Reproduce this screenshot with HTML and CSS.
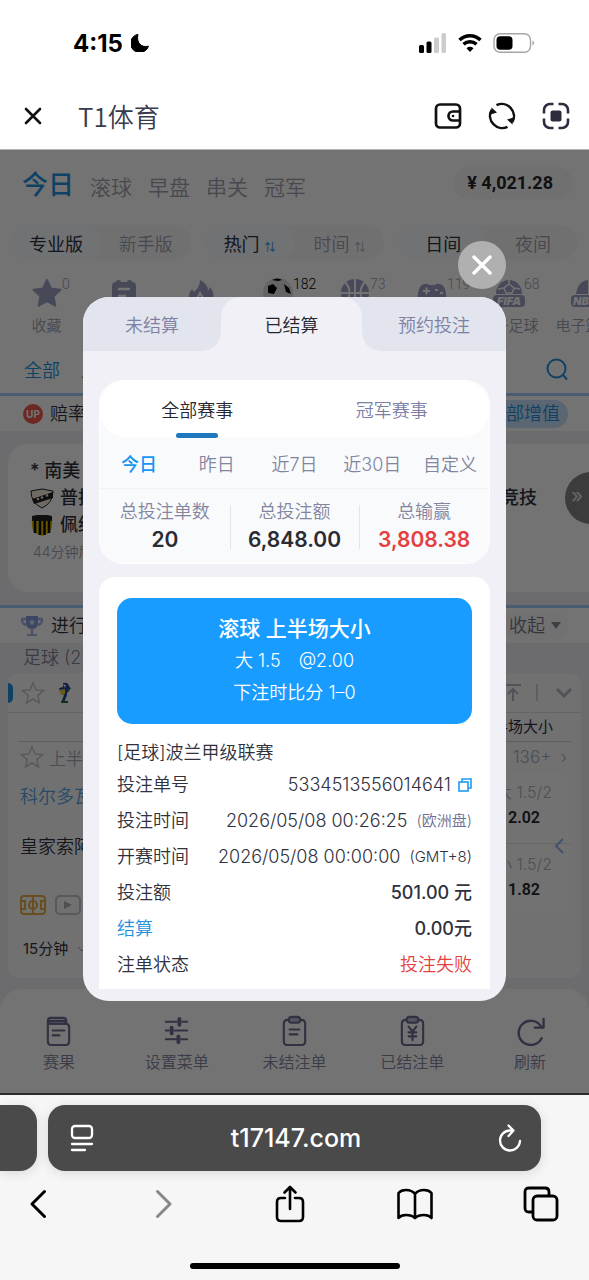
FILE: index.html
```html
<!DOCTYPE html>
<html lang="zh-CN">
<head>
<meta charset="utf-8">
<meta name="viewport" content="width=device-width, initial-scale=1">
<title>T1体育</title>
<link rel="stylesheet" href="styles.css">
</head>
<body>
<header class="top">
  <div class="status">
    <div class="status-time">4:15
      <svg width="18" height="18" viewBox="0 0 18 18"><path d="M7 .3A9.200 9.200 0 1 0 17.500 12.200C10 14 5 8.500 7 .3z" fill="#000" stroke="#000"/></svg>
    </div>
    <div class="status-icons">
      <svg width="28" height="20" viewBox="0 0 28 20"><rect x="0" y="12" width="5" height="8" rx="1.500"/><rect x="7.500" y="8.500" width="5" height="11.500" rx="1.500"/><g fill="#ccc"><rect x="15" y="4.500" width="5" height="15.500" rx="1.500"/><rect x="22.500" y="0" width="4.500" height="20" rx="1.500"/></g></svg>
      <svg width="24" height="20" viewBox="0 0 24 20" fill="none" stroke="#000" stroke-width="3.400"><path d="M1.500 7a15 15 0 0 1 21 0M5.500 11.300a9.500 9.500 0 0 1 13 0"/><path d="M12 19l-3.500-3.700a5 5 0 0 1 7 0z" fill="#000" stroke="none"/></svg>
      <svg width="42" height="20" viewBox="0 0 42 20"><rect x="1" y=".8" width="36.500" height="18.400" rx="6" fill="none" stroke="#a6a6a6" stroke-width="1.400"/><rect x="3.500" y="3.200" width="16" height="13.600" rx="3.800"/><path d="M39.500 7.500v5q1.500-.8 1.500-2.500t-1.500-2.500z" fill="#999"/></svg>
    </div>
  </div>
  <div class="titlebar">
    <button class="icon-btn" aria-label="关闭"><svg width="18" height="18" viewBox="0 0 18 18" fill="none" stroke="#111" stroke-width="2.600" stroke-linecap="round"><path d="M2 2l14 14M16 2L2 16"/></svg></button>
    <h1>T1体育</h1>
    <button class="icon-btn" aria-label="钱包"><svg width="28" height="28" viewBox="0 0 28 28" fill="none" stroke="#111" stroke-width="2.700"><rect x="2" y="2.500" width="24" height="23" rx="4"/><path d="M26 9.500h-7a4.500 4.500 0 0 0 0 9h7" /><circle cx="19" cy="14" r="1.300" fill="#111" stroke="none"/></svg></button>
    <button class="icon-btn" aria-label="刷新"><svg width="28" height="28" viewBox="0 0 28 28" fill="none" stroke="#111" stroke-width="2.500"><path d="M8.500 3.200A12.200 12.200 0 0 1 24.500 20M19.500 24.800A12.200 12.200 0 0 1 3.500 8"/><path d="M3.500 5.500l5.500 5-6.500 2zM24.500 22.500l-5.500-5 6.500-2z" fill="#111" stroke="none"/></svg></button>
    <button class="icon-btn" aria-label="扫描"><svg width="28" height="28" viewBox="0 0 28 28" fill="none" stroke="#2d2c3e" stroke-width="2.600"><path d="M2 11.500V8a6 6 0 0 1 6-6h3.500M16.500 2H20a6 6 0 0 1 6 6v3.500M26 16.500V20a6 6 0 0 1-6 6h-3.500M11.500 26H8a6 6 0 0 1-6-6v-3.500"/><rect x="8.500" y="8.500" width="11" height="11" rx="2" fill="#2d2c3e" stroke="none"/></svg></button>
  </div>
</header>

<main class="app">
  <nav class="main-nav">
    <a class="on" href="#">今日</a><a href="#">滚球</a><a href="#">早盘</a><a href="#">串关</a><a href="#">冠军</a>
    <span class="balance">¥ 4,021.28</span>
  </nav>
  <div class="toggles">
    <div class="toggle"><button class="on">专业版</button><button>新手版</button></div>
    <div class="toggle"><button class="on">热门 <i class="sort blue">⇅</i></button><button>时间 <i class="sort">⇅</i></button></div>
    <div class="toggle"><button class="on">日间</button><button>夜间</button></div>
  </div>
  <ul class="sports">
    <li><svg viewBox="0 0 32 32"><path d="M16 3l4 8.500 9.500 1.300-7 6.500 1.800 9.400L16 24.200l-8.300 4.500 1.800-9.400-7-6.500L12 11.500z" stroke="#9ea1c4" stroke-width="2" stroke-linejoin="round"/></svg><sup>0</sup><b>收藏</b></li>
    <li><svg viewBox="0 0 32 32"><path d="M8 5q0-2 2.500-2T13 5h6q0-2 2.500-2T24 5q4 0 4 4v16q0 4-4 4H8q-4 0-4-4V9q0-4 4-4z"/><path d="M10 12h12M10 19h8" stroke="#fff" stroke-width="2.500"/></svg><b>赛程</b></li>
    <li><svg viewBox="0 0 32 32"><path d="M15 3q8 4 8 11l2-4q5 6 3 13-3 8-12 8T4 22q-1-5 3-10l2 3Q15 10 15 3z"/><path d="M12 22l3-6 5 9" stroke="#fff" stroke-width="2" fill="none"/></svg><b>热门</b></li>
    <li class="on"><svg viewBox="0 0 32 32"><circle cx="16" cy="16" r="15" fill="#ddd"/><path d="M6 9l5-2 4 4-3 6-6-1zM22 7l5 4 2 6-5-2zM10 3q6-3 10 0l-4 1z" fill="#000"/></svg><sup>182</sup><b>足球</b></li>
    <li><svg viewBox="0 0 32 32"><circle cx="16" cy="16" r="14"/><path d="M16 2v28M2 16h28M6 5q9 10 0 22M26 5q-9 10 0 22" fill="none" stroke="#fff" stroke-width="2"/></svg><sup>73</sup><b>篮球</b></li>
    <li><svg viewBox="0 0 32 32"><path d="M8 7q4-1 5 1h6q1-2 5-1 5 1 6 10t-1 9-8-5H11q-5 7-8 5T2 17Q3 8 8 7z"/><path d="M7 14h7M10.500 10.500v7M19 13h3M24 16h3" stroke="#fff" stroke-width="2"/></svg><sup>119</sup><b>电竞</b></li>
    <li><svg viewBox="0 0 32 32"><path d="M3 17a13 14 0 0 1 26 0z"/><path d="M16 7l5 4-2 5h-6l-2-5zM5 12l6-1M27 12l-6-1M16 3v4" stroke="#fff" stroke-width="1.500" fill="none"/><rect y="18" width="32" height="12" rx="4"/><text x="16" y="28" text-anchor="middle" class="fifa">FIFA</text></svg><sup>68</sup><b>电子足球</b></li>
    <li><svg viewBox="0 0 32 32"><path d="M6 17Q8 4 18 3v14z"/><rect x="1" y="18" width="31" height="12" rx="4"/><text x="3" y="28" class="fifa">NBA</text></svg><b>电子篮球</b></li>
  </ul>
  <div class="filters"><button class="on">全部</button><button>人气</button>
    <button class="search" aria-label="搜索"><svg width="24" height="24" viewBox="0 0 24 24" fill="none" stroke="#2391de" stroke-width="2"><circle cx="11.500" cy="11.500" r="9"/><path d="M18 18l4 4.500"/></svg></button>
  </div>
  <div class="promo"><span class="up">UP</span><span>赔率</span><a class="boost" href="#">全部增值</a></div>

  <section class="match-card">
    <h2>* 南美</h2>
    <p><svg width="24" height="24" viewBox="0 0 24 24"><path d="M1 5l11-2 11 2q0 12-11 17Q1 17 1 5z" fill="#f5eedd" stroke="#222"/><path d="M2 13L23 6v6L4 18z" fill="#222"/><path d="M7 13.500l2-1M11 12l2-1M16 10l2-1" stroke="#eee" stroke-width="2"/></svg>普拉<strong>竞技</strong></p>
    <p><svg width="24" height="24" viewBox="0 0 24 24"><path d="M2 4l5-2h10l5 2q1 13-3 16l-7 3-7-3Q1 17 2 4z" fill="#e0b800"/><path d="M5 8v12M10 8v14M14.500 8v14M19 8v12" stroke="#111" stroke-width="2.600"/><path d="M2 3l5-1h10l5 1v5H2z" fill="#222"/></svg>佩纳</p>
    <small>44分钟后</small>
    <button class="next" aria-label="下一场">»</button>
  </section>

  <div class="live-head"><svg width="22" height="22" viewBox="0 0 22 22"><path d="M5 1h12v8q-1 5-6 5T5 9z" fill="#879ddc"/><path d="M5 4H1q0 6 5 6M17 4h4q0 6-5 6M11 13v6" fill="none" stroke="#a5b8ea" stroke-width="2.500"/><path d="M6 19h10v2H6z" fill="#a5b8ea"/><path d="M11 4l1 2 2 .3-1.500 1.500.5 2.200-2-1-2 1 .5-2.200L8 6.300l2-.3z" fill="#dce5ff"/></svg><span>进行</span><button class="fold">收起 <i></i></button></div>
  <h3 class="group">足球 (2)</h3>

  <section class="league">
    <div class="league-head">
      <i class="mark"></i>
      <svg width="24" height="24" viewBox="0 0 24 24" class="star"><path d="M12 2l3 7 7.500.6-5.700 5 1.700 7.400L12 18l-6.500 4 1.700-7.400-5.700-5L9 9z"/></svg>
      <svg width="14" height="22" viewBox="0 0 14 22"><path d="M5 1q5-1 6 3l2 3-4 1v5l-3 8H3l3-8-3-2-2-5 4-1z" fill="#24479a"/><path d="M1 8l6-1v5l-4 1z" fill="#e0cd43"/><path d="M5 2l3 1-1 3z" fill="#eee"/><path d="M9 6l3 2-3 3zM3 19h7v2H3z" fill="#20723b"/></svg>
      <svg class="tools" width="72" height="20" viewBox="0 0 72 20" fill="none" stroke="#b5b7c5" stroke-width="2"><path d="M0 2h16M8 18V6M3 11l5-5 5 5"/><path d="M32 1v17" stroke="#d2d3da"/><path d="M52 6l7 7 7-7" stroke-width="3"/></svg>
    </div>
    <div class="market"><span>上半场大小</span></div>
    <div class="half"><svg width="24" height="24" viewBox="0 0 24 24" class="star"><path d="M12 2l3 7 7.500.6-5.700 5 1.700 7.400L12 18l-6.500 4 1.700-7.400-5.700-5L9 9z"/></svg><span>上半</span><span class="more">136+ &nbsp;›</span></div>
    <div class="league-body">
      <div class="teams">
        <p class="blue">科尔多瓦</p>
        <p>皇家索阿</p>
        <div class="media">
          <svg width="26" height="20" viewBox="0 0 26 20" fill="none" stroke="#e6ae45" stroke-width="2"><rect x="1" y="1" width="24" height="18" rx="3"/><path d="M13 1v18M1 6h4v8H1M25 6h-4v8h4"/><circle cx="13" cy="10" r="4"/></svg>
          <svg width="26" height="20" viewBox="0 0 26 20" fill="none" stroke="#c5c6cf" stroke-width="2"><rect x="1" y="1" width="24" height="18" rx="4"/><path d="M9 6l8 4-8 4z" fill="#b0b1bb" stroke="none"/></svg>
        </div>
        <p class="clock">15分钟 <svg width="10" height="6" viewBox="0 0 10 6" fill="none" stroke="#999"><path d="M1 1l4 4 4-4"/></svg></p>
      </div>
      <div class="odds">
        <button><span>大 1.5/2</span><b>2.02</b></button>
        <button><span>小 1.5/2</span><b>1.82</b></button>
        <svg class="back" width="12" height="16" viewBox="0 0 12 16" fill="none" stroke="#8eb4e8" stroke-width="2"><path d="M9 1L2 8l7 7"/></svg>
      </div>
    </div>
  </section>

  <nav class="tabbar">
    <a href="#"><svg viewBox="0 0 32 32"><path d="M5 9V6q0-3 3-3h13q3 0 3 3v3M5 9h19q3 0 3 4v14q0 4-4 4H9q-4 0-4-4zM10 16h12M10 21h7"/><path d="M6 6h17v3H6z" class="tint"/></svg>赛果</a>
    <a href="#"><svg viewBox="0 0 32 32"><path d="M5 7h11M22 7h5M5 16h3M14 16h13M5 25h11M21 25h6"/><path d="M19 4v6M11 13v6M18 22v6" stroke-width="4"/></svg>设置菜单</a>
    <a href="#"><svg viewBox="0 0 32 32"><path d="M10 5H9Q5 5 5 9v18q0 4 4 4h14q4 0 4-4V9q0-4-4-4h-1"/><rect x="10" y="2" width="12" height="6" rx="3" class="tint"/><path d="M11 15h10M11 20h8"/></svg>未结注单</a>
    <a href="#"><svg viewBox="0 0 32 32"><path d="M10 5H9Q5 5 5 9v18q0 4 4 4h14q4 0 4-4V9q0-4-4-4h-1"/><rect x="10" y="2" width="12" height="6" rx="3" class="tint"/><path d="M12 12l4 5 4-5M16 17v9M12 18h8M12 22h8"/></svg>已结注单</a>
    <a href="#"><svg viewBox="0 0 32 32"><path d="M27 12A12.500 12.500 0 1 0 27.500 24M29.500 4v9h-9" stroke-width="2.500"/></svg>刷新</a>
  </nav>

  <div class="overlay">
    <button class="close" aria-label="关闭"><svg width="20" height="20" viewBox="0 0 20 20" fill="none" stroke="#fff" stroke-width="3.400" stroke-linecap="round"><path d="M2 2l16 16M18 2L2 18"/></svg></button>
    <section class="modal" role="dialog" aria-label="已结算">
      <div class="tabs"><button>未结算</button><button class="on">已结算</button><button>预约投注</button></div>
      <div class="panel">
        <div class="kinds"><button class="on">全部赛事</button><button>冠军赛事</button></div>
        <div class="ranges"><button class="on">今日</button><button>昨日</button><button>近7日</button><button>近30日</button><button>自定义</button></div>
        <dl class="stats">
          <div><dt>总投注单数</dt><dd>20</dd></div>
          <div><dt>总投注额</dt><dd>6,848.00</dd></div>
          <div><dt>总输赢</dt><dd class="red">3,808.38</dd></div>
        </dl>
      </div>
      <article class="ticket">
        <div class="pick"><h2>滚球 上半场大小</h2><p>大 1.5<span>@2.00</span></p><p>下注时比分 1–0</p></div>
        <p class="league-name">[足球]波兰甲级联赛</p>
        <dl class="rows">
          <div><dt>投注单号</dt><dd>5334513556014641<button class="copy" aria-label="复制"><svg width="14" height="14" viewBox="0 0 14 14" fill="none" stroke="#1d9bf0" stroke-width="1.600"><path d="M4 4V1h9v9h-3"/><rect x="1" y="4" width="9" height="9"/></svg></button></dd></div>
          <div><dt>投注时间</dt><dd>2026/05/08 00:26:25<small class="muted">(欧洲盘)</small></dd></div>
          <div><dt>开赛时间</dt><dd>2026/05/08 00:00:00<small>(GMT+8)</small></dd></div>
          <div><dt>投注额</dt><dd class="strong">501.00 元</dd></div>
          <div><dt class="blue">结算</dt><dd class="strong">0.00元</dd></div>
          <div><dt>注单状态</dt><dd class="red">投注失败</dd></div>
        </dl>
      </article>
    </section>
  </div>
</main>

<footer class="browser">
  <div class="urls">
    <div class="prev-tab"></div>
    <div class="url">
      <button class="icon-btn" aria-label="页面菜单"><svg width="24" height="28" viewBox="0 0 24 28" fill="none" stroke="#fff" stroke-width="2.300" stroke-linecap="round"><rect x="2" y="2" width="20" height="12" rx="3"/><path d="M2 20h20M2 26h13"/></svg></button>
      <span>t17147.com</span>
      <button class="icon-btn" aria-label="重新加载"><svg width="24" height="28" viewBox="0 0 24 28" fill="none" stroke="#fff" stroke-width="2.300" stroke-linecap="round" stroke-linejoin="round"><path d="M14 6.500h-2A10 10 0 1 0 22 17M10.500 1.500l5 5-5 5.500"/></svg></button>
    </div>
  </div>
  <nav class="tools-row">
    <button class="icon-btn" aria-label="后退"><svg width="18" height="30" viewBox="0 0 18 30" fill="none" stroke="#000" stroke-width="3" stroke-linecap="round" stroke-linejoin="round"><path d="M15.500 2.500L3 15l12.500 12.500"/></svg></button>
    <button class="icon-btn" aria-label="前进"><svg width="18" height="30" viewBox="0 0 18 30" fill="none" stroke="#888" stroke-width="3" stroke-linecap="round" stroke-linejoin="round"><path d="M2.500 2.500L15 15 2.500 27.500"/></svg></button>
    <button class="icon-btn" aria-label="分享"><svg width="30" height="38" viewBox="0 0 30 38" fill="none" stroke="#000" stroke-width="2.600" stroke-linecap="round" stroke-linejoin="round"><path d="M10 13H6q-4 0-4 4v15q0 4 4 4h18q4 0 4-4V17q0-4-4-4h-4M15 24V2M9.500 7.500L15 2l5.500 5.500"/></svg></button>
    <button class="icon-btn" aria-label="书签"><svg width="38" height="32" viewBox="0 0 38 32" fill="none" stroke="#000" stroke-width="2.600" stroke-linejoin="round"><path d="M19 6Q16 2 10 2 5 2 2.500 5v25Q5 27 10 27q6 0 9 3 3-3 9-3 5 0 7.500 3V5Q33 2 28 2q-6 0-9 4zM19 6v24"/></svg></button>
    <button class="icon-btn" aria-label="标签页"><svg width="36" height="36" viewBox="0 0 36 36" fill="none" stroke="#000" stroke-width="2.800"><rect x="10" y="10" width="24" height="24" rx="4"/><path d="M10 26H6q-4 0-4-4V6q0-4 4-4h16q4 0 4 4v4"/></svg></button>
  </nav>
  <div class="home"></div>
</footer>
</body>
</html>
```

FILE: styles.css
```css
* { box-sizing: border-box; }
body {
  margin: 0;
  min-height: 100vh;
  display: flex;
  flex-direction: column;
  font-family: Inter, "Noto Sans CJK SC", sans-serif;
  font-size: 18px;
  font-weight: 350;
  color: #30313d;
  background: #fff;
}
h1, h2, h3, p, dl, dd, dt, ul { margin: 0; padding: 0; font-weight: inherit; font-size: inherit; }
button { border: 0; padding: 0; background: none; font: inherit; color: inherit; }
a { color: inherit; text-decoration: none; }
i { font-style: normal; }
svg { display: block; flex: none; }
.icon-btn { display: flex; align-items: center; justify-content: center; }

/* status bar and title */
.top { height: 150px; flex: none; border-bottom: 1px solid #b5b5b5; }
.status { height: 86px; padding: 0 54px 0 73px; display: flex; justify-content: space-between; align-items: center; }
.status-time { display: flex; align-items: center; gap: 8px; font-size: 24px; font-weight: 700; color: #000; }
.status-icons { display: flex; align-items: center; gap: 11px; }
.titlebar { height: 60px; padding: 0 19px 0 24px; display: flex; align-items: center; gap: 26px; }
.titlebar h1 { flex: 1; margin-left: 10px; font-family: "Noto Sans CJK SC", sans-serif; font-size: 26px; line-height: 36px; color: #3a3a4a; }

/* page */
.app { position: relative; flex: 1; display: flex; flex-direction: column; overflow: hidden; background: #f0f0f5; }
.main-nav { height: 67px; padding: 0 16px 2px 22px; display: flex; align-items: center; gap: 16px; background: #fff; font-size: 21px; color: #a0a1b0; white-space: nowrap; }
.main-nav a { padding-top: 6px; }
.main-nav .on { font-size: 26px; font-weight: 500; color: #2391de; padding-top: 0; }
.balance { margin-left: auto; padding: 4px 20px 4px 14px; border-radius: 18px; background: #f8f8fa; font-family: Roboto, sans-serif; font-size: 18px; line-height: 24px; font-weight: 700; color: #26262e; }
.toggles { height: 53px; padding: 8px 11px 10px; display: grid; grid-template-columns: 1fr 1fr 1fr; gap: 14px; background: #fff; }
.toggle { display: flex; border-radius: 18px; background: #f8f8fa; color: #a0a1b0; }
.toggle button { flex: 1; white-space: nowrap; }
.toggle .on { border-radius: 18px; color: #30313d; font-weight: 400; background: #fafcff; }
.sort { font-size: 11px; }
.sort.blue { color: #2391de; }
.sports { flex: none; height: 74px; margin: 0; padding: 0 8px; display: flex; overflow: hidden; list-style: none; background: #fff; }
.sports li { position: relative; flex: 0 0 77px; display: flex; flex-direction: column; align-items: center; gap: 7px; padding-top: 7px; color: #a0a1b0; font-size: 15px; }
.sports svg { width: 32px; height: 32px; fill: #9ea1c4; }
.sports b { font-weight: inherit; line-height: 20px; white-space: nowrap; }
.sports sup { position: absolute; left: 54px; top: 5px; font-family: Roboto, sans-serif; font-size: 14px; line-height: 18px; }
.sports .on { color: #000; }
.sports .fifa { font: italic 900 11px Inter, sans-serif; fill: #fff; }
.filters { height: 52px; padding: 0 20px 0 24px; display: flex; align-items: center; gap: 21px; background: #fff; border-bottom: 3px solid #9fcef6; }
.filters .on { color: #2391de; }
.search { margin-left: auto; }
.promo { height: 35px; padding: 0 21px 0 23px; display: flex; align-items: center; gap: 7px; background: #fff; line-height: 24px; }
.up { width: 20px; height: 20px; border-radius: 50%; background: #f0594b; color: #fff; font-size: 10px; line-height: 20px; font-weight: 700; text-align: center; }
.boost { margin-left: auto; padding: 0 8px; border-radius: 15px; background: #c8e2fb; color: #2391de; line-height: 28px; }
.match-card { position: relative; overflow: hidden; height: 148px; margin: 13px 0 13px 8px; padding: 13px 22px; border-radius: 20px 0 0 20px; background: #fff; }
.match-card h2 { font-weight: 500; line-height: 27px; }
.match-card p { display: flex; align-items: center; gap: 6px; line-height: 27px; font-weight: 500; }
.match-card strong { margin-left: auto; margin-right: 30px; font-weight: 500; }
.match-card small { display: block; padding: 0 3px; font-size: 14px; line-height: 28px; color: #a0a1b0; }
.next { position: absolute; right: -28px; top: 28px; width: 52px; height: 52px; padding: 0 28px 4px 0; border-radius: 50%; background: #858585; color: #ddd; font-size: 20px; line-height: 24px; font-weight: 500; }
.live-head { height: 38px; padding: 0 21px; display: flex; align-items: center; gap: 8px; background: #fff; border-top: 3px solid #9fcef6; line-height: 24px; }
.fold { margin-left: auto; padding: 0 7px; display: flex; align-items: center; gap: 6px; border-radius: 14px; background: #fafafb; line-height: 28px; color: #777988; }
.fold i { border: 5px solid transparent; border-top: 7px solid #8b8c98; border-bottom: 0; }
.group { height: 30px; padding-left: 23px; line-height: 30px; color: #81839a; }

.league { margin: 0 8px; height: 305px; border-radius: 12px; background: #fbfbfc; display: flex; flex-direction: column; overflow: hidden; }
.league-head { height: 40px; display: flex; align-items: center; gap: 13px; border-bottom: 1px solid #dddde3; }
.mark { width: 5px; height: 20px; margin-right: -5px; border-radius: 0 6px 6px 0; background: #2391de; }
.star { fill: none; stroke: #c4c5cf; stroke-width: 1.5; }
.tools { margin-left: auto; margin-right: 4px; }
.market { height: 29px; margin: 0 10px; padding-right: 18px; line-height: 28px; text-align: right; font-size: 15px; font-weight: 400; border-bottom: 1px solid #d2d3da; }
.half { height: 30px; padding: 0 14px 0 12px; display: flex; align-items: center; gap: 5px; font-size: 17px; color: #a9aab8; }
.more { margin-left: auto; }
.league-body { flex: 1; display: flex; justify-content: space-between; }
.teams { width: 120px; padding-left: 12px; white-space: nowrap; line-height: 50px; }
.teams .blue { color: #55a5e6; }
.teams .media { height: 62px; display: flex; gap: 9px; align-items: center; padding-top: 4px; }
.teams .clock { display: flex; align-items: center; gap: 9px; padding-left: 3px; font-size: 15px; line-height: 30px; font-weight: 400; }
.odds { position: relative; width: 160px; height: 143px; margin-right: 10px; display: grid; gap: 1px; background: #e2e2e7; border-radius: 8px; overflow: hidden; }
.odds button { display: flex; flex-direction: column; align-items: flex-end; justify-content: center; gap: 4px; padding: 0 19px 4px 0; background: #fdfdfe; font-size: 16px; line-height: 20px; color: #b0b1bd; }
.odds b { padding-right: 12px; font-family: Roboto, sans-serif; font-weight: 600; line-height: 24px; color: #26262e; }
.back { position: absolute; right: 5px; top: 66px; }

.tabbar { flex: none; height: 104px; margin-top: auto; padding-top: 26px; display: grid; grid-template-columns: repeat(5, 1fr); border-radius: 22px 22px 0 0; background: #fff; font-size: 16px; color: #83859f; }
.tabbar a { display: flex; flex-direction: column; align-items: center; gap: 4px; line-height: 24px; }
.tabbar svg { width: 31px; height: 31px; fill: none; stroke: #6d6e92; stroke-width: 2.2; stroke-linecap: round; stroke-linejoin: round; }
.tabbar .tint { fill: #b9bbd3; }

/* settled bets dialog */
.overlay { position: absolute; inset: 0; padding: 91px 14.1%; display: flex; flex-direction: column; gap: 8px; background: rgba(0, 0, 0, .55); }
.close { align-self: flex-end; flex: none; width: 48px; height: 48px; border-radius: 50%; display: flex; align-items: center; justify-content: center; background: #b0b0b0; }
.modal { border-radius: 26px; overflow: hidden; background: #f0f0f6; padding-bottom: 12px; }
.tabs { height: 54px; display: grid; grid-template-columns: 138fr 141fr 144fr; background: #e2e5ed; color: #7d80a3; }
.tabs .on { position: relative; color: #26262e; border-radius: 20px 20px 0 0; background: #f0f0f6; }
.tabs .on::before, .tabs .on::after { content: ""; position: absolute; bottom: 0; width: 18px; height: 18px; }
.tabs .on::before { right: 100%; background: radial-gradient(circle at 0 0, transparent 17px, #f0f0f6 18px); }
.tabs .on::after { left: 100%; background: radial-gradient(circle at 100% 0, transparent 17px, #f0f0f6 18px); }
.panel { margin: 29px 16px 13px; border: 1px solid #fff; border-radius: 24px; overflow: hidden; background: #f8fafc; color: #83859f; }
.kinds { height: 56px; display: grid; grid-template-columns: 1fr 1fr; border-radius: 26px; background: #fff; }
.kinds button { color: #7d80a3; }
.kinds .on { position: relative; color: #26262e; }
.kinds .on::after { content: ""; position: absolute; left: calc(50% - 21px); bottom: -1px; width: 42px; height: 5px; border-radius: 3px; background: #1f78bd; }
.ranges { height: 52px; display: grid; grid-template-columns: repeat(5, 1fr); border-bottom: 1px solid #f0f1f4; }
.ranges button { white-space: nowrap; }
.ranges .on { color: #1596f5; font-weight: 500; }
.stats { height: 74px; padding: 10px 0; display: grid; grid-template-columns: 1fr 1fr 1fr; text-align: center; }
.stats dt { line-height: 26px; }
.stats dd { font-size: 21px; font-weight: 600; line-height: 30px; color: #2a2b33; }
.stats div { position: relative; white-space: nowrap; }
.stats div + div::before { content: ""; position: absolute; left: 0; top: 6px; width: 1px; height: 44px; background: #e3e5ea; }
.stats .red, .rows .red { color: #e53f41; }
.ticket { margin: 0 16px; padding: 21px 18px 6px; border-radius: 16px 16px 0 0; background: #fff; }
.pick { padding: 14px 0 15px; border-radius: 15px; background: #189cff; color: #fff; text-align: center; }
.pick h2 { font-size: 21px; font-weight: 500; line-height: 33px; }
.pick p { line-height: 32px; }
.pick span { margin-left: 18px; }
.league-name { padding-top: 15px; line-height: 28px; }
.rows div { min-height: 36px; display: flex; align-items: center; justify-content: space-between; line-height: 26px; white-space: nowrap; }
.rows dd { display: flex; align-items: center; }
.rows small { margin-left: 9px; font-size: 15px; }
.rows .muted { color: #6d6f94; }
.rows .strong { font-weight: 500; }
.rows .blue { color: #2391de; }
.copy { margin-left: 7px; }

/* browser chrome */
.browser { flex: none; height: 187px; border-top: 2px solid #2c2c2c; background: #f6f6f6; display: flex; flex-direction: column; align-items: center; }
.urls { width: 100%; height: 76px; padding: 10px 48px 0 0; display: flex; gap: 11px; }
.prev-tab { width: 37px; border-radius: 0 17px 17px 0; background: #4a4a4a; box-shadow: 0 2px 12px rgba(0, 0, 0, .12); }
.url { flex: 1; padding: 0 19px 0 22px; display: flex; align-items: center; justify-content: space-between; border-radius: 17px; background: #4a4a4a; color: #fff; font-size: 25px; font-weight: 500; box-shadow: 0 2px 12px rgba(0, 0, 0, .12); }
.tools-row { width: 100%; height: 66px; padding: 0 28px 0 18px; display: flex; align-items: center; justify-content: space-between; }
.tools-row .icon-btn { width: 40px; }
.home { width: 210px; height: 6px; margin-top: 26px; border-radius: 3px; background: #000; }
```
